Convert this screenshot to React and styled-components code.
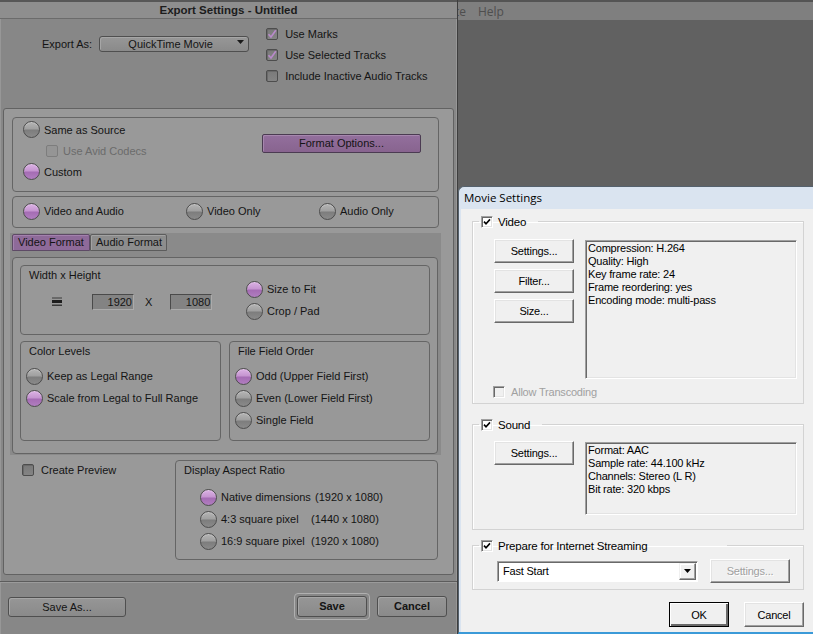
import React from 'react';
import styled, { createGlobalStyle } from 'styled-components';

const GlobalStyle = createGlobalStyle`
  html, body {
    margin: 0;
    padding: 0;
    background: #616161;
  }
  body {
    width: 813px;
    height: 634px;
    overflow: hidden;
    font-family: "Liberation Sans", Arial, sans-serif;
  }
  * {
    box-sizing: border-box;
  }
`;

const Desktop = styled.div`
  position: relative;
  width: 813px;
  height: 634px;
  background: #616161;
  overflow: hidden;
`;

const MenuBar = styled.div`
  display: flex;
  align-items: center;
  height: 20px;
  border-top: 2px solid #545454;
  background: #7f7f7f;
  font-family: "Open Sans", "Liberation Sans", sans-serif;
  font-size: 12px;
  color: #4e4e4e;
`;

const MenuLead = styled.div`
  width: 466px;
  text-align: right;
  white-space: pre;
  overflow: hidden;
`;

const MenuItem = styled.span`
  margin-left: 12px;
`;

/* ---------- Avid export dialog ---------- */

const AvidWindow = styled.div`
  position: absolute;
  left: 0;
  top: 0;
  width: 458px;
  height: 634px;
  display: flex;
  flex-direction: column;
  background: #878787;
  border-right: 1px solid #3e3e3e;
  box-shadow: inset 1px 0 #979797, inset -1px 0 #979797;
  font-size: 11px;
  color: #141414;
`;

const AvidTitle = styled.div`
  height: 19px;
  border-top: 2px solid #575757;
  border-bottom: 1px solid #6b6b6b;
  background: #8e8e8e;
  text-align: center;
  font-weight: bold;
  font-size: 11.5px;
  line-height: 16px;
  color: #1c1c1c;
`;

const TopSection = styled.div`
  height: 89px;
  display: flex;
  align-items: flex-start;
  padding: 4px 0 0 42px;
`;

const ExportAs = styled.div`
  display: flex;
  align-items: center;
  gap: 7px;
  height: 16px;
  margin-top: 13px;
`;

const Dropdown = styled.div`
  width: 150px;
  height: 16px;
  display: flex;
  align-items: center;
  padding-right: 4px;
  border: 1px solid #4f4f4f;
  border-radius: 3px;
  background: linear-gradient(#979797, #8a8a8a);
  box-shadow: inset 1px 1px #a6a6a6;
`;

const DropText = styled.span`
  flex: 1;
  text-align: center;
  padding-left: 4px;
`;

const DropArrow = styled.svg`
  width: 7px;
  height: 4px;
  margin-top: -5px;
`;

const CheckColumn = styled.div`
  display: flex;
  flex-direction: column;
  margin-left: 17px;
`;

const Row = styled.div`
  display: flex;
  align-items: center;
  height: ${p => p.$h || 21}px;
  gap: ${p => (p.$gap === undefined ? 4 : p.$gap)}px;
  padding-left: ${p => p.$indent || 0}px;
  color: ${p => (p.$muted ? '#6b6b6b' : 'inherit')};
  white-space: pre;
`;

const Radio = styled.span`
  flex: none;
  width: 17px;
  height: 17px;
  border-radius: 50%;
  border: 1px solid #4c4c4c;
  background: ${p =>
    p.$on
      ? 'linear-gradient(#dcb2e5 0%, #c595d0 46%, #a56cb4 54%, #b07ebf 100%)'
      : 'linear-gradient(#b5b5b5 0%, #a0a0a0 46%, #7d7d7d 54%, #8a8a8a 100%)'};
  box-shadow: inset 0 1px rgba(255, 255, 255, 0.25);
`;

const AvidCheckBox = styled.span`
  flex: none;
  width: 12px;
  height: 12px;
  display: flex;
  align-items: center;
  justify-content: center;
  border: 1px solid ${p => (p.$disabled ? '#7d7d7d' : '#4d4d4d')};
  border-radius: 2px;
  background: ${p => (p.$disabled ? '#959595' : 'linear-gradient(#7a7a7a, #848484)')};
  box-shadow: ${p => (p.$disabled ? 'none' : 'inset 1px 1px #6a6a6a')};
`;

const AvidCheck = ({ $on, $disabled }) => (
  <AvidCheckBox $disabled={$disabled}>
    {$on && (
      <svg width="10" height="10" viewBox="0 0 10 10">
        <path d="M1.5 5.2 L4 8 L8.8 1.2" fill="none" stroke="#b98acb" strokeWidth="1.7" />
      </svg>
    )}
  </AvidCheckBox>
);

const Panel = styled.div`
  margin-left: 3px;
  width: 451px;
  display: flex;
  flex-direction: column;
  padding: 8px 14px 14px 8px;
  border: 1px solid #626262;
  border-radius: 3px;
  background: #999999;
`;

const Group = styled.div`
  border: 1px solid #656565;
  border-radius: 4px;
`;

const SourceGroup = styled(Group)`
  height: 75px;
  display: flex;
  justify-content: space-between;
  padding: 1px 17px 8px 10px;
`;

const Stack = styled.div`
  display: flex;
  flex-direction: column;
  margin: ${p => p.$m || '0'};
`;

const FormatButton = styled.div`
  width: 159px;
  height: 19px;
  margin-top: 15px;
  border: 1px solid #4b3b52;
  border-radius: 2px;
  background: linear-gradient(#936f9d, #88648f);
  box-shadow: inset 1px 1px #a687ae;
  text-align: center;
  line-height: 17px;
`;

const ModeGroup = styled(Group)`
  height: 32px;
  margin-top: 4px;
  display: grid;
  grid-template-columns: 163px 133px 1fr;
  align-items: center;
  padding: 0 0 2px 10px;
`;

const TabBand = styled.div`
  margin: 5px -2px 0;
  padding: 1px 3px 1px 2px;
  background: #8a8a8a;
`;

const TabRow = styled.div`
  display: flex;
  height: 17px;
`;

const Tab = styled.div`
  width: ${p => p.$w}px;
  height: 17px;
  padding-left: 5px;
  line-height: 15px;
  border: 1px solid ${p => (p.$active ? '#5e4a66' : '#5c5c5c')};
  border-radius: 2px 2px 0 0;
  background: ${p => (p.$active ? '#8e6a99' : '#8d8d8d')};
  box-shadow: inset 1px 1px ${p => (p.$active ? '#a381ad' : '#a2a2a2')};
`;

const TabBody = styled.div`
  height: 197px;
  margin-top: 6px;
  padding: 7px 7px 12px 7px;
  border: 1px solid #646464;
  border-radius: 4px;
  background: #989898;
`;

const SizeGroup = styled(Group)`
  height: 70px;
  display: grid;
  grid-template-columns: 225px 1fr;
`;

const SizeLeft = styled.div`
  padding: 2px 0 0 8px;
`;

const GroupLabel = styled.div`
  height: 14px;
  line-height: 14px;
`;

const InputRow = styled.div`
  display: flex;
  align-items: center;
  height: 16px;
  margin: 12px 0 0 23px;
`;

const LinkIcon = styled.svg`
  width: 10px;
  height: 10px;
  margin-right: 30px;
`;

const NumField = styled.div`
  width: 42px;
  height: 16px;
  padding-right: 1px;
  border: 1px solid;
  border-color: #4a4a4a #ababab #ababab #4a4a4a;
  background: #838383;
  text-align: right;
  line-height: 14px;
`;

const Times = styled.span`
  margin: 0 18px 0 11px;
`;

const SizeRight = styled.div`
  display: flex;
  flex-direction: column;
  padding-top: 12px;
`;

const LevelsRow = styled.div`
  margin-top: 6px;
  display: grid;
  grid-template-columns: 201px 201px;
  gap: 8px;
`;

const SubGroup = styled(Group)`
  height: 100px;
  padding: 2px 0 0 8px;
`;

const BottomRow = styled.div`
  margin-top: 5px;
  display: grid;
  grid-template-columns: 163px 263px;
`;

const PreviewCell = styled.div`
  padding: 3px 0 0 10px;
`;

const DimName = styled.span`
  display: inline-block;
  width: ${p => p.$w}px;
`;

const AvidFooter = styled.div`
  flex: 1;
  margin-top: 6px;
  display: flex;
  align-items: center;
  padding: 0 10px 3px 8px;
  border-top: 1px solid #5c5c5c;
  box-shadow: inset 0 1px #9b9b9b;
`;

const AvidButton = styled.div`
  width: ${p => p.$w}px;
  height: ${p => p.$h || 21}px;
  border: 1px solid #4f4f4f;
  border-radius: 3px;
  background: linear-gradient(#969696, #8a8a8a);
  box-shadow: inset 1px 1px #a6a6a6;
  text-align: center;
  line-height: ${p => (p.$h || 21) - 2}px;
  font-weight: ${p => (p.$bold ? 'bold' : 'normal')};
`;

const SaveRing = styled.div`
  margin: 0 7px 0 auto;
  padding: 2px;
  border: 1px solid #b0b0b0;
  border-radius: 4px;
`;

/* ---------- QuickTime movie settings dialog ---------- */

const MovieWindow = styled.div`
  position: absolute;
  left: 458px;
  top: 186px;
  width: 360px;
  height: 448px;
  display: flex;
  flex-direction: column;
  background: #dae4f0;
  border: 1px solid #55616d;
  border-right: none;
  border-bottom: 2px solid #3b9ad8;
  border-top-left-radius: 6px;
`;

const WinTitle = styled.div`
  height: 22px;
  padding-left: 5px;
  line-height: 22px;
  font-family: "Open Sans", "Liberation Sans", sans-serif;
  font-size: 11.5px;
  color: #000;
`;

const WinBody = styled.div`
  flex: 1;
  margin-left: 2px;
  padding: 6px 0 0 11px;
  background: #f0f0f0;
  font-size: 11px;
  letter-spacing: -0.2px;
  color: #000;
`;

const FieldSet = styled.fieldset`
  width: 332px;
  margin: ${p => p.$mt || 0}px 0 0;
  padding: 0;
  border: 1px solid #d3d3d3;
  box-shadow: inset 1px 1px #fff;
  min-inline-size: 0;
`;

const Legend = styled.legend`
  display: flex;
  align-items: center;
  gap: 5px;
  height: 13px;
  margin-left: 6px;
  padding: 0 12px 0 2px;
  min-width: ${p => p.$min || 0}px;
  font-size: 11.5px;
`;

const WinCheckBox = styled.span`
  flex: none;
  width: 12px;
  height: 12px;
  display: flex;
  align-items: center;
  justify-content: center;
  border: 1px solid;
  border-color: #a0a0a0 #fff #fff #a0a0a0;
  box-shadow: inset 1px 1px #696969, inset -1px -1px #e3e3e3;
  background: ${p => (p.$disabled ? '#f0f0f0' : '#fff')};
`;

const WinCheck = ({ $on, $disabled }) => (
  <WinCheckBox $disabled={$disabled}>
    {$on && (
      <svg width="8" height="8" viewBox="0 0 8 8">
        <path d="M1 3.6 L3 5.8 L7 1.4" fill="none" stroke="#000" strokeWidth="1.6" />
      </svg>
    )}
  </WinCheckBox>
);

const VideoBody = styled.div`
  display: grid;
  grid-template-columns: 80px 212px;
  column-gap: 11px;
  align-items: start;
  padding: ${p => p.$pt}px 6px ${p => p.$pb || 0}px 21px;
`;

const ButtonCol = styled.div`
  display: flex;
  flex-direction: column;
  gap: 6px;
`;

const WinButton = styled.div`
  width: ${p => p.$w || 80}px;
  height: ${p => p.$h || 24}px;
  display: flex;
  align-items: center;
  justify-content: center;
  border: 1px solid;
  border-color: ${p => (p.$default ? '#000' : '#fff #696969 #696969 #fff')};
  box-shadow: ${p =>
    p.$default
      ? 'inset 1px 1px #fff, inset -2px -2px #696969, inset -1px -1px #a0a0a0'
      : 'inset -1px -1px #a0a0a0, inset 1px 1px #e3e3e3'};
  background: #f0f0f0;
  color: ${p => (p.$disabled ? '#a0a0a0' : '#000')};
  text-shadow: ${p => (p.$disabled ? '1px 1px #fff' : 'none')};
`;

const InfoBox = styled.div`
  height: ${p => p.$h}px;
  margin-top: 1px;
  padding: 1px 2px 0;
  border: 1px solid;
  border-color: #a0a0a0 #fff #fff #a0a0a0;
  box-shadow: inset 1px 1px #696969, inset -1px -1px #e3e3e3;
  background: #f0f0f0;
  line-height: 13px;
`;

const AllowRow = styled.div`
  display: flex;
  align-items: center;
  gap: 6px;
  height: 12px;
  margin: 7px 0 5px 20px;
  color: #a0a0a0;
`;

const StreamRow = styled.div`
  display: flex;
  align-items: center;
  gap: 12px;
  padding: 7px 0 6px 24px;
`;

const Select = styled.div`
  width: 201px;
  height: 21px;
  display: flex;
  align-items: stretch;
  border: 1px solid;
  border-color: #a0a0a0 #fff #fff #a0a0a0;
  box-shadow: inset 1px 1px #696969;
  background: #fff;
  padding: 1px;
`;

const SelectText = styled.span`
  flex: 1;
  padding-left: 4px;
  line-height: 17px;
`;

const SelectArrow = styled.span`
  width: 17px;
  display: flex;
  align-items: center;
  justify-content: center;
  border: 1px solid;
  border-color: #f0f0f0 #696969 #696969 #f0f0f0;
  box-shadow: inset -1px -1px #a0a0a0, inset 1px 1px #fff;
  background: #f0f0f0;
`;

const Actions = styled.div`
  width: 332px;
  margin-top: 12px;
  display: flex;
  justify-content: flex-end;
  gap: 15px;
`;

export default function App() {
  return (
    <>
      <GlobalStyle />
      <Desktop>
        <MenuBar>
          <MenuLead>Marketplace</MenuLead>
          <MenuItem>Help</MenuItem>
        </MenuBar>

        <AvidWindow>
          <AvidTitle>Export Settings - Untitled</AvidTitle>
          <TopSection>
            <ExportAs>
              <span>Export As:</span>
              <Dropdown>
                <DropText>QuickTime Movie</DropText>
                <DropArrow viewBox="0 0 7 4">
                  <path d="M0 0 H7 L3.5 4 Z" fill="#1a1a1a" />
                </DropArrow>
              </Dropdown>
            </ExportAs>
            <CheckColumn>
              <Row $gap={7}><AvidCheck $on />Use Marks</Row>
              <Row $gap={7}><AvidCheck $on />Use Selected Tracks</Row>
              <Row $gap={7}><AvidCheck />Include Inactive Audio Tracks</Row>
            </CheckColumn>
          </TopSection>

          <Panel>
            <SourceGroup>
              <Stack>
                <Row><Radio />Same as Source</Row>
                <Row $indent={23} $gap={5} $muted><AvidCheck $disabled />Use Avid Codecs</Row>
                <Row><Radio $on />Custom</Row>
              </Stack>
              <FormatButton>Format Options...</FormatButton>
            </SourceGroup>

            <ModeGroup>
              <Row><Radio $on />Video and Audio</Row>
              <Row><Radio />Video Only</Row>
              <Row><Radio />Audio Only</Row>
            </ModeGroup>

            <TabBand>
              <TabRow>
                <Tab $w={78} $active>Video Format</Tab>
                <Tab $w={77}>Audio Format</Tab>
              </TabRow>
              <TabBody>
                <SizeGroup>
                  <SizeLeft>
                    <GroupLabel>Width x Height</GroupLabel>
                    <InputRow>
                      <LinkIcon viewBox="0 0 10 10">
                        <rect x="0" y="0.5" width="10" height="1" fill="#3a3a3a" />
                        <rect x="0" y="3" width="10" height="3" fill="#1e1e1e" />
                        <rect x="0" y="7.5" width="10" height="1.5" fill="#3a3a3a" />
                      </LinkIcon>
                      <NumField>1920</NumField>
                      <Times>X</Times>
                      <NumField>1080</NumField>
                    </InputRow>
                  </SizeLeft>
                  <SizeRight>
                    <Row $h={22}><Radio $on />Size to Fit</Row>
                    <Row $h={22}><Radio />Crop / Pad</Row>
                  </SizeRight>
                </SizeGroup>

                <LevelsRow>
                  <SubGroup>
                    <GroupLabel>Color Levels</GroupLabel>
                    <Stack $m="7px 0 0 -3px">
                      <Row $h={22}><Radio />Keep as Legal Range</Row>
                      <Row $h={22}><Radio $on />Scale from Legal to Full Range</Row>
                    </Stack>
                  </SubGroup>
                  <SubGroup>
                    <GroupLabel>File Field Order</GroupLabel>
                    <Stack $m="7px 0 0 -3px">
                      <Row $h={22}><Radio $on />Odd (Upper Field First)</Row>
                      <Row $h={22}><Radio />Even (Lower Field First)</Row>
                      <Row $h={22}><Radio />Single Field</Row>
                    </Stack>
                  </SubGroup>
                </LevelsRow>
              </TabBody>
            </TabBand>

            <BottomRow>
              <PreviewCell>
                <Row $h={14} $gap={7}><AvidCheck />Create Preview</Row>
              </PreviewCell>
              <SubGroup>
                <GroupLabel>Display Aspect Ratio</GroupLabel>
                <Stack $m="9px 0 0 16px">
                  <Row $h={22}><Radio $on /><span><DimName $w={94}>Native dimensions</DimName>(1920 x 1080)</span></Row>
                  <Row $h={22}><Radio /><span><DimName $w={90}>4:3 square pixel</DimName>(1440 x 1080)</span></Row>
                  <Row $h={22}><Radio /><span><DimName $w={90}>16:9 square pixel</DimName>(1920 x 1080)</span></Row>
                </Stack>
              </SubGroup>
            </BottomRow>
          </Panel>

          <AvidFooter>
            <AvidButton $w={118} $h={20}>Save As...</AvidButton>
            <SaveRing>
              <AvidButton $w={70} $bold>Save</AvidButton>
            </SaveRing>
            <AvidButton $w={70} $bold>Cancel</AvidButton>
          </AvidFooter>
        </AvidWindow>

        <MovieWindow>
          <WinTitle>Movie Settings</WinTitle>
          <WinBody>
            <FieldSet>
              <Legend><WinCheck $on />Video</Legend>
              <VideoBody $pt={11}>
                <ButtonCol>
                  <WinButton>Settings...</WinButton>
                  <WinButton>Filter...</WinButton>
                  <WinButton>Size...</WinButton>
                </ButtonCol>
                <InfoBox $h={139}>
                  <div>Compression: H.264</div>
                  <div>Quality: High</div>
                  <div>Key frame rate: 24</div>
                  <div>Frame reordering: yes</div>
                  <div>Encoding mode: multi-pass</div>
                </InfoBox>
              </VideoBody>
              <AllowRow><WinCheck $disabled />Allow Transcoding</AllowRow>
            </FieldSet>

            <FieldSet $mt={14}>
              <Legend><WinCheck $on />Sound</Legend>
              <VideoBody $pt={10} $pb={14}>
                <ButtonCol>
                  <WinButton>Settings...</WinButton>
                </ButtonCol>
                <InfoBox $h={73}>
                  <div>Format: AAC</div>
                  <div>Sample rate: 44.100 kHz</div>
                  <div>Channels: Stereo (L R)</div>
                  <div>Bit rate: 320 kbps</div>
                </InfoBox>
              </VideoBody>
            </FieldSet>

            <FieldSet $mt={9}>
              <Legend $min={248}><WinCheck $on />Prepare for Internet Streaming</Legend>
              <StreamRow>
                <Select>
                  <SelectText>Fast Start</SelectText>
                  <SelectArrow>
                    <svg width="7" height="4" viewBox="0 0 7 4">
                      <path d="M0 0 H7 L3.5 4 Z" fill="#000" />
                    </svg>
                  </SelectArrow>
                </Select>
                <WinButton $disabled>Settings...</WinButton>
              </StreamRow>
            </FieldSet>

            <Actions>
              <WinButton $w={60} $h={25} $default>OK</WinButton>
              <WinButton $w={60} $h={25}>Cancel</WinButton>
            </Actions>
          </WinBody>
        </MovieWindow>
      </Desktop>
    </>
  );
}
